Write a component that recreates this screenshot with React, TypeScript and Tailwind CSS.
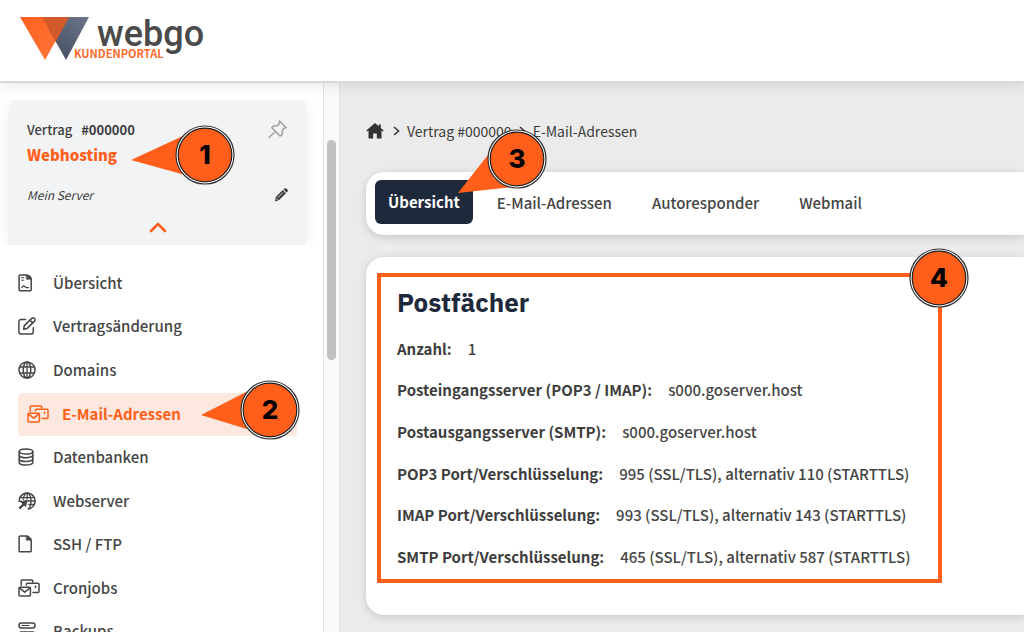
import type { ReactNode } from "react";

const sans = "font-['Noto_Sans_CJK_SC',sans-serif]";

function Icon({ children, w = 18, h = 18 }: { children: ReactNode; w?: number; h?: number }) {
  return (
    <svg
      width={w}
      height={h}
      viewBox={`0 0 ${w} ${h}`}
      fill="none"
      stroke="currentColor"
      strokeWidth="1.5"
      strokeLinecap="round"
      strokeLinejoin="round"
      aria-hidden="true"
      className="block shrink-0"
    >
      {children}
    </svg>
  );
}

const ReportIcon = () => (
  <Icon>
    <path d="M2.2.9h6.6l4.4 4.2v10.6a1.1 1.1 0 0 1-1.1 1.1H2.2a1.1 1.1 0 0 1-1.1-1.1V2a1.1 1.1 0 0 1 1.1-1.1Z" />
    <path d="M8.500 1.200h2.600l2 1.800v2.200H8.500Z" fill="currentColor" strokeWidth=".6" />
    <path d="M3.600 3.700h2.200M3.600 6.200h2.200" strokeWidth="1" />
    <path d="m3.800 13.600 1.800-1.800 1.500 1 1 .8h2.400" strokeWidth="1.300" />
  </Icon>
);

const EditIcon = () => (
  <Icon>
    <path d="M7.500 2.600H3A2.100 2.100 0 0 0 .9 4.700v10.200A2.100 2.100 0 0 0 3 17h10.200a2.100 2.100 0 0 0 2.100-2.100v-4.200" />
    <path d="m5.600 12.300.7-3.700 7.500-7.200a1.800 1.800 0 0 1 2.600 0l.1.1a1.800 1.800 0 0 1 0 2.600L9.200 11.400Z" />
    <path d="m12 3.200 2.700 2.700" />
  </Icon>
);

const GlobeIcon = () => (
  <Icon>
    <circle cx="9" cy="9" r="8" />
    <ellipse cx="9" cy="9" rx="3.800" ry="8" />
    <path d="M9 1v16M1.800 6h14.400M1.800 12h14.400" strokeWidth="1.300" />
  </Icon>
);

const MailboxIcon = () => (
  <Icon w={22}>
    <path d="M3.200 6.300V2.100A1 1 0 0 1 4.200 1h9.600a1 1 0 0 1 1 1v1.100" />
    <rect x="1" y="8.200" width="11.400" height="8.700" rx="1" />
    <path d="m1.600 9.200 5.100 4 5.100-4" />
    <path d="M8.400 6V5.200a1 1 0 0 1 1-1h10.600a1 1 0 0 1 1 1v7.400a1 1 0 0 1-1 1h-5" />
    <path d="M17.500 7.200v1.200" />
  </Icon>
);

const DatabaseIcon = () => (
  <Icon>
    <ellipse cx="8" cy="3.500" rx="6.800" ry="2.600" />
    <path d="M1.200 3.500v11c0 1.400 3 2.600 6.800 2.600s6.800-1.200 6.800-2.600v-11" />
    <path d="M1.200 7.200c0 1.400 3 2.600 6.800 2.600s6.800-1.200 6.800-2.600M1.200 10.900c0 1.400 3 2.600 6.800 2.600s6.800-1.200 6.800-2.600" />
  </Icon>
);

const WebserverIcon = () => (
  <Icon>
    <path d="M1.200 8A8 8 0 1 1 10.300 17" />
    <path d="M5.400 7.500C5.800 3.800 7.300 1 9.200 1c2.100 0 3.800 3.600 3.800 8 0 3.600-1.100 6.600-2.600 7.600M9.200 1v6M2 5.600h14.400M9.500 9h7.400M10.800 12.500h5.400" strokeWidth="1.300" />
    <path d="m8.600 8.600-.9 6-1.600-1.600-3.900 3.900-1.100-1.100 3.900-3.900-1.700-1.600Z" fill="currentColor" strokeWidth="1" />
    <path d="M1 9.200h2.400" />
  </Icon>
);

const FileIcon = () => (
  <Icon>
    <path d="M2.200.9h6.600l4.400 4.200v10.600a1.100 1.100 0 0 1-1.100 1.100H2.200a1.100 1.100 0 0 1-1.100-1.100V2a1.100 1.100 0 0 1 1.100-1.100Z" />
    <path d="M8.500 1.200h2.100l2.500 2.300v1.700H8.500Z" fill="currentColor" strokeWidth=".6" />
  </Icon>
);

const BackupIcon = () => (
  <Icon>
    <rect x="1" y="1" width="16" height="5" rx="2.200" />
    <path d="M4 3.500h7" strokeWidth="1.200" />
    <rect x="1" y="10" width="16" height="5" rx="2.200" />
  </Icon>
);

const nav = [
  { label: "Übersicht", icon: <ReportIcon /> },
  { label: "Vertragsänderung", icon: <EditIcon /> },
  { label: "Domains", icon: <GlobeIcon /> },
  { label: "E-Mail-Adressen", icon: <MailboxIcon />, active: true },
  { label: "Datenbanken", icon: <DatabaseIcon /> },
  { label: "Webserver", icon: <WebserverIcon /> },
  { label: "SSH / FTP", icon: <FileIcon /> },
  { label: "Cronjobs", icon: <MailboxIcon /> },
  { label: "Backups", icon: <BackupIcon /> },
];

const details = [
  ["Anzahl:", "1"],
  ["Posteingangsserver (POP3 / IMAP):", "s000.goserver.host"],
  ["Postausgangsserver (SMTP):", "s000.goserver.host"],
  ["POP3 Port/Verschlüsselung:", "995 (SSL/TLS), alternativ 110 (STARTTLS)"],
  ["IMAP Port/Verschlüsselung:", "993 (SSL/TLS), alternativ 143 (STARTTLS)"],
  ["SMTP Port/Verschlüsselung:", "465 (SSL/TLS), alternativ 587 (STARTTLS)"],
];

function Marker({ n, place, tail }: { n: number; place: string; tail?: string }) {
  return (
    <div className={`pointer-events-none absolute z-20 size-[60px] ${place}`}>
      <svg width="60" height="60" viewBox="0 0 60 60" className="absolute inset-0 overflow-visible" aria-hidden="true">
        {tail && <polygon points={tail} fill="#ff5f1b" />}
        <circle cx="30" cy="30" r="29" fill="#fff" stroke="#333" strokeWidth="1.200" />
        <circle cx="30" cy="30" r="26.800" fill="#ff5f1b" stroke="#1c1c1c" strokeWidth="1.200" />
      </svg>
      <span className="relative flex h-full items-center justify-center font-['Inter',sans-serif] text-[26px] leading-none font-extrabold text-black">
        {n}
      </span>
    </div>
  );
}

function Logo() {
  return (
    <a href="#" className="flex items-start" aria-label="webgo Kundenportal">
      <svg width="69" height="43" viewBox="0 0 69 43" aria-hidden="true" className="block">
        <defs>
          <linearGradient id="left" x1="0" y1="0" x2="1" y2="1">
            <stop offset="0" stopColor="#ff5f1b" />
            <stop offset="1" stopColor="#ff7b42" />
          </linearGradient>
          <linearGradient id="right" x1="0" y1="1" x2="1" y2="0">
            <stop offset="0" stopColor="#3c485c" />
            <stop offset="1" stopColor="#6c7688" />
          </linearGradient>
        </defs>
        <path d="M22 0h47L46 43Z" fill="url(#right)" />
        <path d="M0 0h49L25 43Z" fill="url(#left)" />
        <path d="M22 0h27L35.500 25Z" fill="#d2592b" />
      </svg>
      <span className="-ml-[15px] flex flex-col">
        <span className="pl-[23px] font-['Roboto',sans-serif] text-[36px] leading-[34px] font-medium text-[#4a4a4a]">webgo</span>
        <span className={`${sans} -mt-1 text-[11px] leading-[12px] font-bold text-[#ff6a2b]`}>KUNDENPORTAL</span>
      </span>
    </a>
  );
}

const Chevron = () => (
  <svg width="7" height="10" viewBox="0 0 7 10" fill="none" stroke="currentColor" strokeWidth="1.600" aria-hidden="true">
    <path d="m1 1 4.500 4L1 9" />
  </svg>
);

export default function App() {
  return (
    <div className={`relative flex h-screen flex-col overflow-hidden bg-white text-[#3d3d3d] ${sans}`}>
      <header className="relative z-10 h-[83px] shrink-0 border-b-2 border-[#d8d8d8] bg-white px-5 pt-[17px] shadow-[0_2px_14px_rgba(0,0,0,0.10)]">
        <Logo />
      </header>

      <div className="flex min-h-0 flex-1">
        <aside className="w-[323px] shrink-0 overflow-hidden pt-[17px]">
          <div className="overflow-hidden px-[9px]">
            <section className="mr-2 flex h-[145px] flex-col rounded-t-lg bg-[#f2f3f5] px-[18px] pt-[18px] shadow-[0_0_14px_rgba(0,0,0,0.08)]">
              <div className="flex justify-between">
                <p className="text-[13px] leading-6 font-medium">
                  Vertrag <strong className="pl-[6px] font-bold">#000000</strong>
                </p>
                <button type="button" aria-label="Anheften" className="text-[#a3a3a3]">
                  <svg width="20" height="20" viewBox="0 0 20 20" fill="none" stroke="currentColor" strokeWidth="1.600" strokeLinejoin="round" strokeLinecap="round">
                    <path d="M11.500 1 18 7.500l-2.200 1-1.200 1.200-.6 5.100-2 1.200-8.200-8.200 1.300-1.500 4.600-.8L10.800 4.500Z" />
                    <path d="m7 12-6 5.500" />
                  </svg>
                </button>
              </div>
              <a href="#" className="text-[15px] leading-[26px] font-black text-[#ff5f1b]">Webhosting</a>
              <div className="mt-[15px] flex items-center justify-between">
                <p className="text-[12px] leading-6 italic">Mein Server</p>
                <button type="button" aria-label="Bearbeiten">
                  <svg width="14" height="14" viewBox="0 0 15 15" fill="currentColor">
                    <path d="M10.200 1.400 11.300.6a1.700 1.700 0 0 1 2.300.2l.7.7a1.700 1.700 0 0 1 0 2.400l-1 .9ZM9.400 2.200l3.400 3.400-7.300 7.300-4.700 1.500 1.300-4.900Z" />
                    <path d="m9.700 4.800-5.600 5.600M2.300 11.300l1.500 1.500" stroke="#f2f3f5" strokeWidth=".9" />
                  </svg>
                </button>
              </div>
              <button type="button" aria-label="Einklappen" className="mt-[14px] self-center text-[#ff5f1b]">
                <svg width="18" height="12" viewBox="0 0 18 12" fill="none" stroke="currentColor" strokeWidth="2.600" strokeLinecap="round">
                  <path d="m2 10 7-7 7 7" />
                </svg>
              </button>
            </section>
          </div>

          <nav className="mt-[17px] mr-[26px] ml-[18px] grid h-[392px] grid-rows-9">
            {nav.map((item) => (
              <a
                key={item.label}
                href="#"
                className={
                  item.active
                    ? "flex items-center rounded bg-[#fce8df] pl-[9px] text-[15px] leading-6 font-bold text-[#ff5f1b]"
                    : "flex items-center pb-[2px] text-[15px] leading-6 font-medium text-[#454545]"
                }
              >
                <span className="w-[35px]">{item.icon}</span>
                {item.label}
              </a>
            ))}
          </nav>
        </aside>

        <div className="w-[17px] shrink-0 border-x border-[#e2e2e2] bg-[#fafafa] px-[3px] pt-[57px]">
          <div className="h-[220px] rounded-full bg-[#c1c1c1]" />
        </div>

        <main className="min-w-0 flex-1 bg-[#ebebeb] pt-9 pl-[26px]">
          <nav aria-label="Brotkrumen" className="flex items-center text-[14px] leading-6">
            <a href="#" aria-label="Startseite">
              <svg width="18" height="16" viewBox="0 0 18 16" fill="#333">
                <path d="M9 0 .3 7.600 1.200 8.600l1.300-1V15.500h4.700v-5h3.600v5h4.700V7.600l1.300 1 .9-1L14.800 5V1.500h-2.100v1.700Z" />
              </svg>
            </a>
            <span className="ml-[9px]"><Chevron /></span>
            <a href="#" className="ml-[7px]">Vertrag #000000</a>
            <span className="ml-[7px]"><Chevron /></span>
            <a href="#" className="ml-[7px]">E-Mail-Adressen</a>
          </nav>

          <nav aria-label="Bereiche" className="mt-[29px] flex h-[63px] items-center rounded-l-[18px] bg-white pb-1 pl-[9px] text-[15px] leading-6 font-medium text-[#454545] shadow-[0_2px_8px_rgba(0,0,0,0.16)]">
            <a href="#" className="flex h-11 items-center rounded-md bg-[#1e293b] px-[13px] font-bold text-white">Übersicht</a>
            <a href="#" className="ml-6 pt-[2px]">E-Mail-Adressen</a>
            <a href="#" className="ml-10 pt-[2px]">Autoresponder</a>
            <a href="#" className="ml-10 pt-[2px]">Webmail</a>
          </nav>

          <section className="relative mt-[22px] rounded-l-[18px] bg-white px-[31px] pt-[25px] pb-[37px] shadow-[0_2px_8px_rgba(0,0,0,0.16)]">
            <div className="pointer-events-none absolute top-4 left-[11px] h-[310px] w-[565px] border-4 border-[#ff5f1b]" />
            <h2 className="font-['IBM_Plex_Sans','Noto_Sans_CJK_SC',sans-serif] text-[26px] leading-10 font-bold text-[#1e293b]">Postfächer</h2>
            <dl className="mt-[6px] grid h-[250px] grid-rows-6 text-[15px] leading-6">
              {details.map(([k, v]) => (
                <div key={k} className="flex items-center gap-4 whitespace-nowrap">
                  <dt className="font-bold">{k}</dt>
                  <dd className="font-medium text-[#454545]">{v}</dd>
                </div>
              ))}
            </dl>
          </section>
        </main>
      </div>

      <Marker n={1} place="top-[125px] left-[175px]" tail="-44,35 10,10 10,50" />
      <Marker n={2} place="top-[380px] left-[240px]" tail="-39,35 10,10 10,50" />
      <Marker n={3} place="top-[129px] left-[487px]" tail="-29,64 4,22 26,58" />
      <Marker n={4} place="top-[248px] left-[909px]" />
    </div>
  );
}
